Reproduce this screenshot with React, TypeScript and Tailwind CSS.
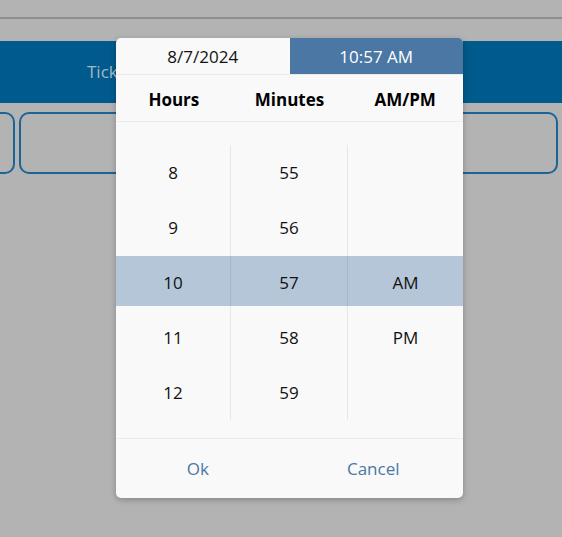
import React from 'react';

const hours = ['8', '9', '10', '11', '12'];
const minutes = ['55', '56', '57', '58', '59'];
const periods = ['', '', 'AM', 'PM', ''];

function Column({ items, last }: { items: string[]; last?: boolean }) {
  return (
    <div className={`flex flex-col ${last ? '' : 'border-r border-[rgba(0,0,0,0.07)]'}`}>
      {items.map((v, i) => (
        <div key={i} className="h-[55px] flex items-center justify-center">
          {v}
        </div>
      ))}
    </div>
  );
}

function App() {
  return (
    <div
      className="relative w-[562px] h-[537px] overflow-hidden bg-[#b3b3b3]"
      style={{ fontFamily: '"Open Sans", "Noto Sans", sans-serif' }}
    >
      {/* Page behind the overlay */}
      <div className="h-[17px]" />
      <div className="h-[2px] bg-[#8e8e8e]" />
      <div className="h-[22px]" />
      <div className="h-[62px] bg-[#005a8c] flex items-center pl-[87px] text-[17px] text-[#a7b8c5]">
        Tickets
      </div>
      <div className="flex gap-[4px] mt-[9px] ml-[-60px] mr-[4px]">
        <div className="w-[75px] h-[62px] rounded-[10px] border-2 border-[#1b6497]" />
        <div className="flex-1 h-[62px] rounded-[10px] border-2 border-[#1b6497]" />
      </div>

      {/* Time picker dialog */}
      <div className="absolute left-[116px] top-[38px] w-[347px] h-[460px] rounded-[5px] bg-[#f9f9f9] shadow-[0_2px_6px_rgba(0,0,0,0.25)] overflow-hidden flex flex-col text-[17px] text-[#111]">
        <div className="grid grid-cols-2 h-[37px] border-b border-[#ebebeb]">
          <div className="flex items-center justify-center pt-[1px]">8/7/2024</div>
          <div className="flex items-center justify-center pt-[1px] bg-[#4a77a4] text-white">10:57 AM</div>
        </div>
        <div className="grid grid-cols-3 h-[47px] pt-[4px] border-b border-[#ebebeb] font-bold text-black">
          <div className="flex items-center justify-center">Hours</div>
          <div className="flex items-center justify-center">Minutes</div>
          <div className="flex items-center justify-center">AM/PM</div>
        </div>
        <div className="relative mt-[23px] h-[275px]">
          <div className="absolute left-0 right-0 top-[111px] h-[50px] bg-[#b4c6d8]" />
          <div className="relative grid grid-cols-[115px_117px_115px]">
            <Column items={hours} />
            <Column items={minutes} />
            <Column items={periods} last />
          </div>
        </div>
        <div className="mt-[18px] border-t border-[#ebebeb] grid grid-cols-2 flex-1 text-[#4a77a4]">
          <div className="flex items-center justify-center pr-[10px]">Ok</div>
          <div className="flex items-center justify-center pr-[6px]">Cancel</div>
        </div>
      </div>
    </div>
  );
}

export default App;
